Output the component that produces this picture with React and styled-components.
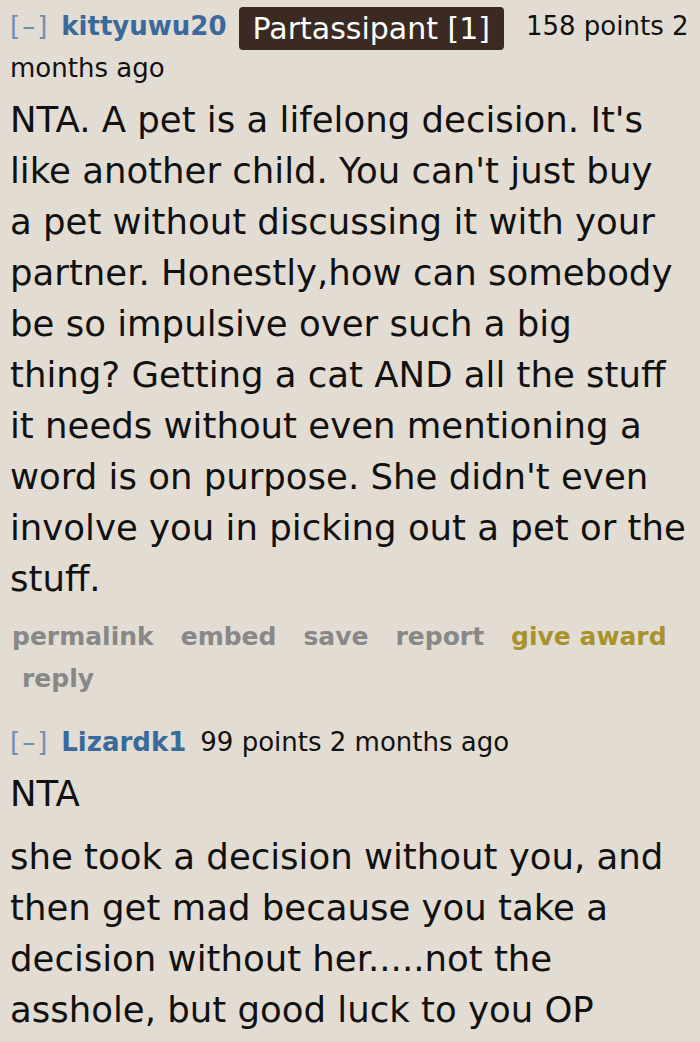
import React from 'react';
import styled, { createGlobalStyle } from 'styled-components';

const Global = createGlobalStyle`
  body {
    margin: 0;
    background: #e3dcd2;
    font-family: "DejaVu Sans", Verdana, sans-serif;
    color: #111;
  }
`;

const Page = styled.div`
  padding: 5px 4px 0 10px;
`;

const Comment = styled.div`
  margin-bottom: ${p => p.gap || 0}px;
`;

const Tagline = styled.div`
  font-size: 26px;
  line-height: 42px;
  color: #111;
`;

const Toggle = styled.span`
  color: #6f8fb5;
  margin-right: 12px;
  letter-spacing: 2px;
`;

const Author = styled.span`
  color: #3a6a9c;
  font-weight: bold;
  margin-right: 14px;
`;

const Flair = styled.span`
  display: inline-block;
  background: #3b2a22;
  color: #fff;
  font-size: 30px;
  line-height: 43px;
  padding: 0 14px;
  border-radius: 4px;
  margin: -6px 22px -6px -2px;
  vertical-align: -4px;
`;

const Body = styled.div`
  font-size: 35.5px;
  line-height: 51px;
  margin-top: 5px;
`;

const Para = styled.p`
  margin: 0 0 12px;
`;

const Actions = styled.div`
  font-size: 25px;
  font-weight: bold;
  line-height: 42px;
  margin-top: 10px;
  padding-left: 2px;
`;

const Action = styled.span`
  display: inline-block;
  margin-right: 27px;
  color: ${p => (p.gold ? '#a8922e' : '#888')};
  &:last-child { margin-left: 10px; }
`;

export default function App() {
  return (
    <Page>
      <Global />
      <Comment gap={21}>
        <Tagline>
          <Toggle>[–]</Toggle>
          <Author>kittyuwu20</Author>
          <Flair>Partassipant [1]</Flair>
          158 points 2 months ago
        </Tagline>
        <Body>
          <Para>
            NTA. A pet is a lifelong decision. It's<br />
            like another child. You can't just buy<br />
            a pet without discussing it with your<br />
            partner. Honestly,how can somebody<br />
            be so impulsive over such a big<br />
            thing? Getting a cat AND all the stuff<br />
            it needs without even mentioning a<br />
            word is on purpose. She didn't even<br />
            involve you in picking out a pet or the<br />
            stuff.
          </Para>
        </Body>
        <Actions>
          <Action>permalink</Action>
          <Action>embed</Action>
          <Action>save</Action>
          <Action>report</Action>
          <Action gold>give award</Action>
          <Action>reply</Action>
        </Actions>
      </Comment>
      <Comment>
        <Tagline>
          <Toggle>[–]</Toggle>
          <Author>Lizardk1</Author>
          99 points 2 months ago
        </Tagline>
        <Body>
          <Para>NTA</Para>
          <Para>
            she took a decision without you, and then get mad because you take a decision
            without her.....not the asshole, but good luck to you OP
          </Para>
        </Body>
      </Comment>
    </Page>
  );
}
